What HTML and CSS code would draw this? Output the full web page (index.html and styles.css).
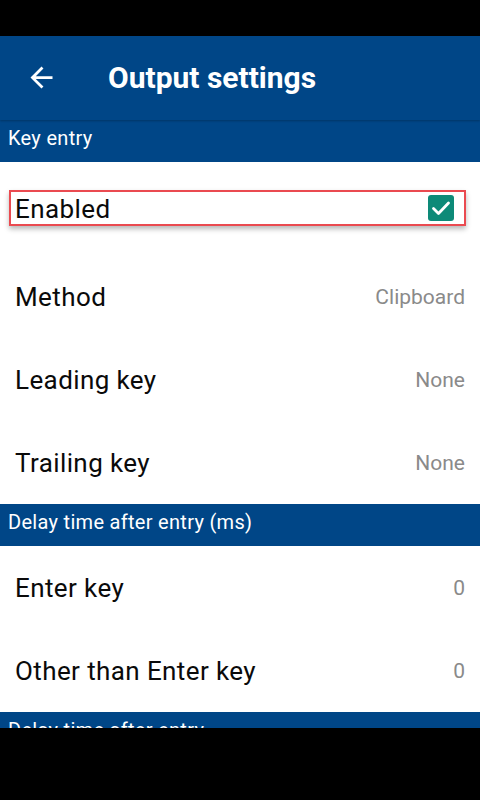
FILE: index.html
```html
<!DOCTYPE html>
<html>
<head>
<meta charset="utf-8">
<link rel="stylesheet" href="styles.css">
</head>
<body>
<div class="screen">
  <div class="statusbar"></div>
  <div class="viewport">
    <header class="appbar">
      <svg class="back" viewBox="0 0 24 24" width="33" height="33"><path fill="#fff" d="M20 11H7.83l5.59-5.59L12 4l-8 8 8 8 1.41-1.41L7.83 13H20v-2z"/></svg>
      <h1 class="title">Output settings</h1>
    </header>
    <div class="section">Key entry</div>
    <div class="row row-enabled">
      <div class="highlight">
        <span class="label">Enabled</span>
        <span class="checkbox">
          <svg viewBox="0 0 24 24" width="24" height="24"><path fill="none" stroke="#fff" stroke-width="2.8" stroke-linecap="round" stroke-linejoin="round" d="M4.5 12.5l5 5L19.5 7"/></svg>
        </span>
      </div>
    </div>
    <div class="row"><span class="label">Method</span><span class="value">Clipboard</span></div>
    <div class="row"><span class="label">Leading key</span><span class="value">None</span></div>
    <div class="row"><span class="label">Trailing key</span><span class="value">None</span></div>
    <div class="section">Delay time after entry (ms)</div>
    <div class="row"><span class="label">Enter key</span><span class="value">0</span></div>
    <div class="row"><span class="label">Other than Enter key</span><span class="value">0</span></div>
    <div class="section">Delay time after entry</div>
  </div>
  <div class="navbar"></div>
</div>
</body>
</html>
```
FILE: styles.css
```css
* { box-sizing: border-box; margin: 0; padding: 0; }
html, body { width: 480px; height: 800px; background: #000; }
body { font-family: Roboto, "Noto Sans", sans-serif; overflow: hidden; }
.screen { display: flex; flex-direction: column; height: 800px; }
.statusbar { height: 36px; background: #000; flex: none; }
.viewport { height: 692px; overflow: hidden; background: #fff; flex: none; }
.navbar { flex: 1; background: #000; }
.appbar {
  height: 84px; background: #004687; display: flex; align-items: center;
  box-shadow: 0 1px 2px rgba(0,0,0,0.25); position: relative; z-index: 1;
}
.back { margin-left: 25px; flex: none; margin-top: -1px; }
.title { color: #fff; font-size: 30px; font-weight: 700; margin-left: 50px; line-height: 1; }
.section {
  height: 42px; background: #004687; color: #fff; font-size: 20px; letter-spacing: 0.3px;
  display: flex; align-items: center; padding-left: 8px; padding-bottom: 9px;
  line-height: 1; padding-top: 2px;
}
.row {
  height: 83px; display: flex; align-items: center; justify-content: space-between;
  padding: 0 15px 0 15px;
}
.row-enabled { height: 93px; padding: 28px 14px 0 9px; align-items: flex-start; }
.highlight {
  width: 457px; height: 36px; border: 2px solid #ea4a50;
  display: flex; align-items: center; justify-content: space-between;
  padding: 2px 10px 0 4px;
  box-shadow: 0 3px 5px rgba(0,0,0,0.28);
}
.label { font-size: 26px; color: #0a0a0a; letter-spacing: 0.4px; }
.value { font-size: 21px; color: #8a8a8a; }
.checkbox {
  width: 26px; height: 26px; border-radius: 3px; background: #0d8a78;
  display: flex; align-items: center; justify-content: center; margin-top: -2px;
}
```
